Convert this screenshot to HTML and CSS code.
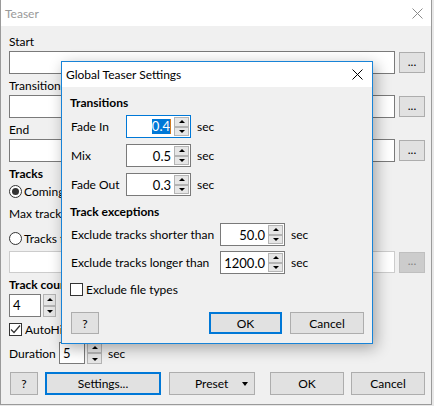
FILE: index.html
```html
<!DOCTYPE html>
<html>
<head>
<meta charset="utf-8">
<link rel="stylesheet" href="styles.css">
</head>
<body>
<div class="win">
  <div class="titlebar">
    <span class="title">Teaser</span>
    <svg class="close" width="11" height="11" viewBox="0 0 11 11"><path d="M0.5 0.5L10.5 10.5M10.5 0.5L0.5 10.5" stroke="#8a8a8a" stroke-width="1" fill="none"/></svg>
  </div>
  <div class="body">
    <div class="lbl">Start</div>
    <div class="filerow"><div class="field wide"></div><button class="btn dots">...</button></div>
    <div class="lbl">Transition</div>
    <div class="filerow"><div class="field wide"></div><button class="btn dots">...</button></div>
    <div class="lbl">End</div>
    <div class="filerow"><div class="field wide"></div><button class="btn dots">...</button></div>

    <div class="lbl bold tracks">Tracks</div>
    <div class="opt opt1"><span class="radio on"></span><span>Coming up next</span></div>
    <div class="lbl maxt">Max tracks</div>
    <div class="opt opt2"><span class="radio"></span><span>Tracks from list</span></div>
    <div class="filerow dis-row"><div class="field wide dis"></div><button class="btn dots dis">...</button></div>
    <div class="lbl bold tcount">Track count</div>
    <div class="spinrow">
      <div class="field cnt">4</div>
      <div class="spin ext tall"><span class="sb up"></span><span class="sb dn"></span></div>
    </div>
    <div class="opt opt3"><span class="check"><svg width="11" height="11" viewBox="0 0 11 11"><path d="M1 5.5L4 8.5L10 1.5" stroke="#333" stroke-width="1.2" fill="none"/></svg></span><span>AutoHide</span></div>
    <div class="durrow">
      <span class="durlbl">Duration</span>
      <div class="field dur">5</div>
      <div class="spin ext"><span class="sb up"></span><span class="sb dn"></span></div>
      <span class="sec">sec</span>
    </div>
    <div class="btnbar">
      <button class="btn q">?</button>
      <button class="btn def settings">Settings...</button>
      <button class="btn preset"><span>Preset</span><span class="arrow"></span></button>
      <button class="btn ok">OK</button>
      <button class="btn cancel">Cancel</button>
    </div>
  </div>

  <div class="dialog">
    <div class="dtitle">
      <span>Global Teaser Settings</span>
      <svg class="dclose" width="11" height="11" viewBox="0 0 11 11"><path d="M0.5 0.5L10.5 10.5M10.5 0.5L0.5 10.5" stroke="#000" stroke-width="1" fill="none"/></svg>
    </div>
    <div class="dbody">
      <div class="lbl bold dsec1">Transitions</div>
      <div class="drow r1">
        <span class="dl short">Fade In</span>
        <div class="numbox focus"><span class="sel">0.4</span><span class="caret"></span><div class="spin in"><span class="sb up"></span><span class="sb dn"></span></div></div>
        <span class="sec">sec</span>
      </div>
      <div class="drow r2">
        <span class="dl short">Mix</span>
        <div class="numbox"><span>0.5</span><div class="spin in"><span class="sb up"></span><span class="sb dn"></span></div></div>
        <span class="sec">sec</span>
      </div>
      <div class="drow r2">
        <span class="dl short">Fade Out</span>
        <div class="numbox"><span>0.3</span><div class="spin in"><span class="sb up"></span><span class="sb dn"></span></div></div>
        <span class="sec">sec</span>
      </div>
      <div class="lbl bold dsec2">Track exceptions</div>
      <div class="drow r3">
        <span class="dl long">Exclude tracks shorter than</span>
        <div class="numbox"><span>50.0</span><div class="spin in"><span class="sb up"></span><span class="sb dn"></span></div></div>
        <span class="sec">sec</span>
      </div>
      <div class="drow r4">
        <span class="dl long">Exclude tracks longer than</span>
        <div class="numbox"><span>1200.0</span><div class="spin in"><span class="sb up"></span><span class="sb dn"></span></div></div>
        <span class="sec">sec</span>
      </div>
      <div class="opt dopt"><span class="check"></span><span>Exclude file types</span></div>
      <div class="dbtns">
        <button class="btn dq">?</button>
        <span class="grow"></span>
        <button class="btn def dok">OK</button>
        <button class="btn dcancel">Cancel</button>
      </div>
    </div>
  </div>
</div>
</body>
</html>
```
FILE: styles.css
```css
html, body {
  margin: 0;
  padding: 0;
  background: #e8e8e8;
}
body {
  font-family: "Lato", "Noto Sans", sans-serif;
  font-size: 12px;
  color: #000;
}
.win {
  position: relative;
  box-sizing: border-box;
  width: 432px;
  height: 405px;
  border: 1px solid #9a9a9a;
  border-top: 0;
  background: #f0f0f0;
  overflow: hidden;
}
.titlebar {
  height: 26px;
  background: #fff;
  display: flex;
  align-items: center;
  padding-left: 4px;
}
.title {
  color: #999;
  font-size: 12px;
}
.close {
  margin-left: auto;
  margin-right: 8px;
}
.body {
  padding: 8px 0 0 8px;
}
.lbl {
  height: 16px;
  line-height: 16px;
  margin-bottom: 1px;
  white-space: nowrap;
}
.bold { font-weight: bold; }
.filerow {
  display: flex;
  align-items: center;
  gap: 4px;
  margin-bottom: 4px;
}
.field {
  box-sizing: border-box;
  height: 23px;
  border: 1px solid #7a7a7a;
  background: #fff;
}
.field.wide { width: 386px; }
.field.dis { border-color: #cccccc; height: 22px; }
.btn {
  box-sizing: border-box;
  margin: 0;
  padding: 0;
  height: 23px;
  background: #e1e1e1;
  border: 1px solid #adadad;
  font-family: inherit;
  font-size: 12px;
  color: #000;
  display: flex;
  align-items: center;
  justify-content: center;
}
.btn.dots {
  width: 26px;
  height: 21px;
  padding-bottom: 3px;
}
.btn.dots.dis {
  background: #cccccc;
  border-color: #bfbfbf;
  color: #838383;
}
.btn.def {
  border: 2px solid #0078d7;
}
.lbl.tracks { margin-top: 1px; }
.opt {
  display: flex;
  align-items: center;
  height: 16px;
  white-space: nowrap;
}
.opt1 { margin-top: 1px; }
.lbl.maxt { margin-top: 7px; margin-bottom: 0; }
.opt2 { margin-top: 8px; }
.dis-row { margin-top: 5px; margin-bottom: 0; }
.lbl.tcount { margin-top: 4px; margin-bottom: 0; }
.radio {
  box-sizing: border-box;
  width: 13px;
  height: 13px;
  border: 1px solid #333;
  border-radius: 50%;
  background: #fff;
  margin-right: 2px;
  position: relative;
}
.radio.on::after {
  content: "";
  position: absolute;
  left: 2px;
  top: 2px;
  width: 7px;
  height: 7px;
  border-radius: 50%;
  background: #333;
}
.check {
  box-sizing: border-box;
  width: 13px;
  height: 13px;
  border: 1px solid #333;
  background: #fff;
  margin-right: 3px;
  display: flex;
  align-items: center;
  justify-content: center;
}
.check svg { display: block; }
.spinrow {
  display: flex;
  margin-top: 1px;
  gap: 2px;
}
.field.cnt {
  width: 32px;
  padding-left: 3px;
  line-height: 21px;
  font-size: 13px;
}
.spin {
  display: flex;
  flex-direction: column;
}
.spin.ext {
  width: 14px;
  gap: 0;
}
.spin.ext.tall { width: 13px; }
.sb {
  position: relative;
  box-sizing: border-box;
  flex: 1;
  background: #e6e6e6;
  border: 1px solid #b4b4b4;
}
.sb::after {
  content: "";
  position: absolute;
  left: 50%;
  top: 50%;
  margin-left: -3px;
  width: 0;
  height: 0;
  border-left: 3px solid transparent;
  border-right: 3px solid transparent;
}
.sb.up::after {
  margin-top: -2px;
  border-bottom: 3px solid #000;
}
.sb.dn::after {
  margin-top: -1px;
  border-top: 3px solid #000;
}
.opt3 { margin-top: 4px; }
.durrow {
  display: flex;
  align-items: center;
  margin-top: 5px;
  height: 22px;
}
.durlbl { width: 50px; }
.field.dur {
  width: 26px;
  height: 22px;
  padding-left: 3px;
  line-height: 20px;
  font-size: 13px;
}
.durrow .spin.ext {
  height: 22px;
  width: 15px;
  margin-left: 2px;
}
.sec { margin-left: 6px; }
.btnbar {
  display: flex;
  margin-top: 8px;
}
.btn.q { width: 28px; margin-left: 1px; }
.btn.settings { width: 116px; margin-left: 7px; }
.btn.preset {
  width: 86px;
  margin-left: 8px;
  justify-content: flex-start;
  padding-left: 25px;
}
.arrow {
  margin-left: 14px;
  width: 0;
  height: 0;
  border-left: 3.5px solid transparent;
  border-right: 3.5px solid transparent;
  border-top: 4px solid #000;
}
.btn.ok { width: 74px; margin-left: 15px; }
.btn.cancel { width: 74px; margin-left: 7px; }

/* dialog */
.dialog {
  position: absolute;
  left: 60px;
  top: 61px;
  box-sizing: border-box;
  width: 312px;
  height: 283px;
  border: 1px solid #1883d7;
  background: #f0f0f0;
  box-shadow: 3px 4px 14px rgba(0, 0, 0, 0.32);
}
.dtitle {
  height: 25px;
  background: #fff;
  display: flex;
  align-items: center;
  padding-left: 4px;
}
.dclose {
  margin-left: auto;
  margin-right: 9px;
}
.dbody {
  padding: 8px 8px 0 8px;
}
.dsec1 { margin-bottom: 0; }
.drow {
  display: flex;
  align-items: center;
  height: 23px;
}
.drow.r1 { margin-top: 4px; }
.drow.r2 { margin-top: 6px; }
.drow.r3 { margin-top: 3px; }
.drow.r4 { margin-top: 5px; }
.dl {
  padding-left: 1px;
  box-sizing: border-box;
  white-space: nowrap;
}
.dl.short { width: 56px; }
.dl.long { width: 150px; }
.numbox {
  box-sizing: border-box;
  width: 65px;
  height: 23px;
  border: 1px solid #7a7a7a;
  background: #fff;
  display: flex;
  align-items: center;
  justify-content: flex-end;
  padding: 1px;
  font-size: 13px;
}
.numbox.focus { border-color: #0078d7; }
.numbox > span:first-child { margin-right: 3px; }
.numbox.focus > .sel {
  background: #0078d7;
  color: #fff;
  margin-right: 0;
  line-height: 15px;
}
.caret {
  width: 1px;
  height: 15px;
  background: #d07a20;
  margin-right: 3px;
}
.spin.in {
  width: 15px;
  height: 19px;
}
.dsec2 { margin-top: 8px; margin-bottom: 0; }
.dopt { margin-top: 7px; }
.dbtns {
  display: flex;
  margin-top: 15px;
}
.dbtns .btn { height: 22px; }
.btn.dq { width: 28px; margin-left: 1px; }
.grow { flex: 1; }
.btn.dok { width: 73px; }
.btn.dcancel { width: 74px; margin-left: 8px; }
```
